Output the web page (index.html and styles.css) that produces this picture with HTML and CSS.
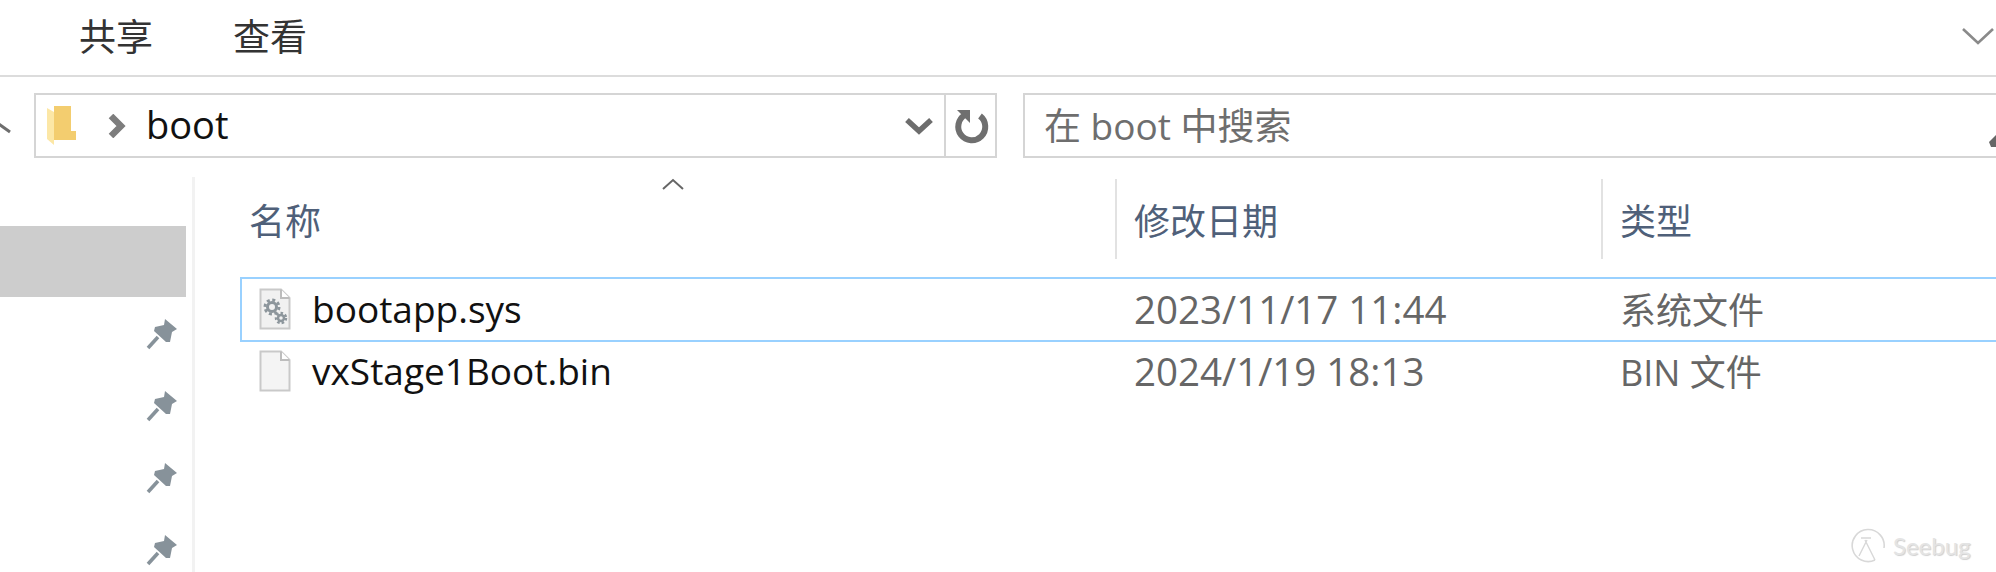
FILE: index.html
```html
<!DOCTYPE html>
<html lang="zh-CN">
<head>
    <meta charset="UTF-8">
    <title>boot</title>
    <link rel="stylesheet" href="styles.css">
</head>
<body>

    <!-- Ribbon tabs -->
    <div class="ribbon">
        <span class="tab">共享</span>
        <span class="tab">查看</span>
        <svg class="ribbon-toggle" width="34" height="20" viewBox="0 0 34 20">
            <path d="M2 2 L17 16 L32 2" fill="none" stroke="#8a8a8a" stroke-width="2.6"/>
        </svg>
    </div>

    <!-- Address and search -->
    <div class="address-row">
        <svg class="up-arrow" width="14" height="20" viewBox="0 0 14 20">
            <path d="M-8 2 L10 15" fill="none" stroke="#6e6e6e" stroke-width="3"/>
        </svg>
        <div class="address-box">
            <svg class="folder-icon" width="30" height="42" viewBox="0 0 30 42">
                <path d="M7 1 H24 V26 H29 V35 H7 Z" fill="#f3cd6f"/>
                <path d="M0 3 L7 7 V40 L0 34 Z" fill="#fce7a6"/>
            </svg>
            <svg class="crumb-arrow" width="18" height="24" viewBox="0 0 18 24">
                <path d="M3 2 L13 12 L3 22" fill="none" stroke="#7d7d7d" stroke-width="6.5"/>
            </svg>
            <span class="crumb">boot</span>
            <svg class="drop-arrow" width="30" height="18" viewBox="0 0 30 18">
                <path d="M3 3 L15 14 L27 3" fill="none" stroke="#6d6d6d" stroke-width="5.5"/>
            </svg>
            <div class="refresh">
                <svg width="36" height="36" viewBox="0 0 36 36">
                    <path d="M12 7 A13.5 13.5 0 1 0 27 8" fill="none" stroke="#6f6f6f" stroke-width="6"/>
                    <path d="M4 2 H17 V15 Z" fill="#6f6f6f"/>
                </svg>
            </div>
        </div>
        <div class="search-box">
            <span>在 boot 中搜索</span>
            <svg class="search-icon" width="7" height="14" viewBox="0 0 7 14">
                <path d="M0 8 L7 1 V13 H2 Z" fill="#666"/>
            </svg>
        </div>
    </div>

    <div class="main">
        <!-- Quick access column -->
        <div class="sidebar">
            <div class="side-selected"></div>
            <div class="pin-list">
                <svg class="pin" width="34" height="34" viewBox="0 0 34 34"><use href="#pin-shape"/></svg>
                <svg class="pin" width="34" height="34" viewBox="0 0 34 34"><use href="#pin-shape"/></svg>
                <svg class="pin" width="34" height="34" viewBox="0 0 34 34"><use href="#pin-shape"/></svg>
                <svg class="pin" width="34" height="34" viewBox="0 0 34 34"><use href="#pin-shape"/></svg>
            </div>
        </div>

        <!-- File list -->
        <div class="file-list">
            <svg class="sort-arrow" width="24" height="14" viewBox="0 0 24 14">
                <path d="M2 12 L12 3 L22 12" fill="none" stroke="#666" stroke-width="2"/>
            </svg>
            <div class="list-head">
                <div class="col-name">名称</div>
                <div class="col-date">修改日期</div>
                <div class="col-type">类型</div>
            </div>
            <div class="file-row selected">
                <div class="cell-name">
                    <svg class="file-icon" width="32" height="42" viewBox="0 0 32 42">
                        <path d="M1.5 1.5 H22 L30.5 10 V40.5 H1.5 Z" fill="#f1f1f1" stroke="#c9c9c9" stroke-width="2"/>
                        <path d="M22 1.5 V10 H30.5" fill="#fff" stroke="#bdbdbd" stroke-width="2"/>
                        <circle cx="13" cy="19" r="4.5" fill="none" stroke="#8d969c" stroke-width="3"/>
                        <circle cx="13" cy="19" r="7" fill="none" stroke="#8d969c" stroke-width="3" stroke-dasharray="3 2.5"/>
                        <circle cx="22" cy="30" r="3" fill="none" stroke="#8d969c" stroke-width="2.5"/>
                        <circle cx="22" cy="30" r="5" fill="none" stroke="#8d969c" stroke-width="2.5" stroke-dasharray="2.5 2"/>
                    </svg>
                    <span>bootapp.sys</span>
                </div>
                <div class="cell-date">2023/11/17 11:44</div>
                <div class="cell-type">系统文件</div>
            </div>
            <div class="file-row">
                <div class="cell-name">
                    <svg class="file-icon" width="32" height="42" viewBox="0 0 32 42">
                        <path d="M1.5 1.5 H22 L30.5 10 V40.5 H1.5 Z" fill="#f4f4f4" stroke="#c9c9c9" stroke-width="2"/>
                        <path d="M22 1.5 V10 H30.5" fill="#fff" stroke="#bdbdbd" stroke-width="2"/>
                    </svg>
                    <span>vxStage1Boot.bin</span>
                </div>
                <div class="cell-date">2024/1/19 18:13</div>
                <div class="cell-type">BIN 文件</div>
            </div>
        </div>
    </div>

    <!-- Watermark -->
    <div class="watermark">
        <svg width="36" height="38" viewBox="0 0 36 38">
            <path d="M24 34 A16 16 0 1 1 33 22" fill="none" stroke="#d8d8d8" stroke-width="1.6"/>
            <path d="M14 14 L24 34 M16 14 L8 30 M10 12 H20" fill="none" stroke="#d8d8d8" stroke-width="1.4"/>
        </svg>
        <span>Seebug</span>
    </div>

    <svg class="defs" width="0" height="0">
        <symbol id="pin-shape" viewBox="0 0 34 34">
            <path d="M20 2 L32 12 L27 15 L25 25 L21 25 L9 14 L10 10 L19 8 Z" fill="#87929a"/>
            <path d="M13 20 L3 31" fill="none" stroke="#87929a" stroke-width="3.6"/>
        </symbol>
    </svg>

</body>
</html>
```

FILE: styles.css
```css
html, body {
    margin: 0;
    padding: 0;
    width: 1996px;
    height: 572px;
    overflow: hidden;
    background-color: #fff;
    font-family: "Open Sans", "Noto Sans CJK SC", sans-serif;
}

/* Ribbon */
.ribbon {
    display: flex;
    align-items: center;
    height: 75px;
    padding-left: 79px;
    gap: 80px;
    border-bottom: 2px solid #dcdcdc;
    box-sizing: content-box;
}

.tab {
    margin-bottom: 5px;
    font-family: "Noto Sans CJK SC", sans-serif;
    font-size: 37px;
    line-height: 1;
    color: #333;
}

.ribbon-toggle {
    margin-left: auto;
    margin-right: 1px;
    margin-bottom: 2px;
}

/* Address row */
.address-row {
    display: flex;
    align-items: stretch;
    height: 65px;
    margin-top: 16px;
    position: relative;
}

.up-arrow {
    position: absolute;
    left: 0;
    top: 24px;
}

.address-box {
    display: flex;
    align-items: center;
    width: 963px;
    margin-left: 34px;
    border: 2px solid #d5d5d5;
    box-sizing: border-box;
}

.folder-icon {
    margin-left: 11px;
}

.crumb-arrow {
    margin-left: 31px;
}

.crumb {
    margin-left: 20px;
    margin-bottom: 4px;
    font-size: 38px;
    color: #111;
}

.drop-arrow {
    margin-left: auto;
    margin-right: 10px;
}

.refresh {
    display: flex;
    align-items: center;
    justify-content: center;
    width: 51px;
    height: 100%;
    border-left: 2px solid #d5d5d5;
    box-sizing: border-box;
}

.search-box {
    display: flex;
    align-items: center;
    flex: 1;
    margin-left: 26px;
    padding-left: 19px;
    border: 2px solid #d5d5d5;
    border-right: none;
    font-size: 37px;
    color: #6e6e6e;
}

.search-box span {
    margin-bottom: 3px;
}

.search-icon {
    margin-left: auto;
    margin-top: 30px;
}

/* Main area */
.main {
    display: flex;
    height: 414px;
}

.sidebar {
    width: 192px;
    flex: none;
    margin-top: 19px;
    padding-top: 0;
    border-right: 3px solid #f2f2f2;
    box-sizing: content-box;
}

.side-selected {
    width: 186px;
    height: 71px;
    margin-top: 49px;
    background-color: #cdcdcd;
}

.pin-list {
    display: flex;
    flex-direction: column;
    gap: 38px;
    align-items: flex-end;
    padding-right: 13px;
    margin-top: 20px;
}

.pin {
    display: block;
}

/* File list */
.file-list {
    flex: 1;
    position: relative;
    padding-left: 45px;
}

.sort-arrow {
    position: absolute;
    left: 466px;
    top: 19px;
}

.list-head {
    display: grid;
    grid-template-columns: 875px 486px 1fr;
    height: 80px;
    margin-top: 21px;
    font-family: "Noto Sans CJK SC", sans-serif;
    font-size: 36px;
    line-height: 80px;
    color: #4f6079;
}

.col-name {
    padding-left: 9px;
}

.col-date, .col-type {
    padding-left: 17px;
    border-left: 2px solid #e2e2e2;
}

.file-row {
    display: grid;
    grid-template-columns: 875px 486px 1fr;
    align-items: center;
    height: 62px;
    padding-bottom: 5px;
    box-sizing: border-box;
    font-size: 36px;
    border: 2px solid transparent;
    border-right: none;
}

.file-row.selected {
    margin-top: 18px;
    height: 65px;
    padding-bottom: 2px;
    border-color: #99d1ff;
}

.cell-name {
    display: flex;
    align-items: center;
    gap: 21px;
    padding-left: 17px;
    font-size: 37px;
    color: #111;
}

.cell-date, .cell-type {
    padding-left: 17px;
    color: #666;
}

.cell-date {
    font-size: 38.5px;
}

.file-icon {
    flex: none;
}

/* Watermark, sits over the list */
.watermark {
    position: absolute;
    left: 1851px;
    top: 526px;
    display: flex;
    align-items: center;
    gap: 6px;
    font-family: "Lato", sans-serif;
    font-size: 24px;
    color: #e4e4e4;
    text-shadow: 1px 1px 1px #cfcfcf;
}

.defs {
    position: absolute;
}
```
